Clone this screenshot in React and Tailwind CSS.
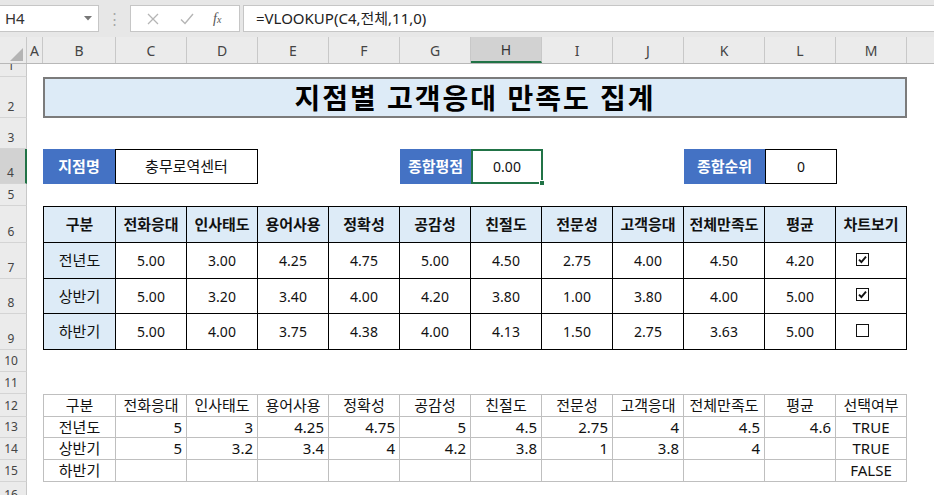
import React from 'react'

const colW = ['w-[73px]', 'w-[71px]', 'w-[71px]', 'w-[71px]', 'w-[71px]', 'w-[71px]', 'w-[71px]', 'w-[71px]', 'w-[71px]', 'w-[81px]', 'w-[71px]', 'w-[71px]']
const letters = ['B', 'C', 'D', 'E', 'F', 'G', 'H', 'I', 'J', 'K', 'L', 'M']

const heads = ['구분', '전화응대', '인사태도', '용어사용', '정확성', '공감성', '친절도', '전문성', '고객응대', '전체만족도', '평균']

const rows = [
  ['전년도', '5.00', '3.00', '4.25', '4.75', '5.00', '4.50', '2.75', '4.00', '4.50', '4.20', true],
  ['상반기', '5.00', '3.20', '3.40', '4.00', '4.20', '3.80', '1.00', '3.80', '4.00', '5.00', true],
  ['하반기', '5.00', '4.00', '3.75', '4.38', '4.00', '4.13', '1.50', '2.75', '3.63', '5.00', false],
]

const raw = [
  ['전년도', '5', '3', '4.25', '4.75', '5', '4.5', '2.75', '4', '4.5', '4.6', 'TRUE'],
  ['상반기', '5', '3.2', '3.4', '4', '4.2', '3.8', '1', '3.8', '4', '', 'TRUE'],
  ['하반기', '', '', '', '', '', '', '', '', '', '', 'FALSE'],
]

function RowHead({ n, h, active }) {
  return (
    <div className={`${h} w-[27px] shrink-0 overflow-hidden flex items-end justify-center pr-[4px] pb-[1px] text-[12px] text-[#444] border-b border-[#d4d4d4] ${active ? 'bg-[#d2d2d2] border-r-2 border-r-[#217346]' : 'bg-[#ebebeb] border-r border-r-[#c8c8c8]'}`}>
      {n}
    </div>
  )
}

function Check({ on }) {
  return (
    <svg width="13" height="13" viewBox="0 0 13 13">
      <rect x="0.5" y="0.5" width="12" height="12" fill="white" stroke="#111" />
      {on && <path d="M3 6.6 L5.4 9 L10 3.6" fill="none" stroke="#111" strokeWidth="1.9" />}
    </svg>
  )
}

export default function App() {
  return (
    <div className="w-[934px] h-[495px] overflow-hidden bg-white font-['Noto_Sans','Noto_Sans_CJK_KR',sans-serif] text-[#111]">
      {/* formula bar */}
      <div className="h-[37px] bg-[#e7e7e7] flex items-start pt-[5px] gap-0">
        <div className="w-[99px] h-[27px] bg-white border border-l-0 border-[#c6c6c6] flex items-center justify-between pl-[5px] pr-[6px] text-[15px] text-[#333]">
          <span>H4</span>
          <svg width="8" height="5" viewBox="0 0 8 5"><path d="M0 0 L8 0 L4 4.5 Z" fill="#777" /></svg>
        </div>
        <div className="w-[31px] h-[27px] flex items-center justify-center text-[#a8a8a8] text-[15px]">⋮</div>
        <div className="w-[110px] h-[27px] bg-white border border-[#c6c6c6] flex items-center pl-[16px] text-[#b5b5b5]">
          <svg width="12" height="12" viewBox="0 0 12 12"><path d="M1 1 L11 11 M11 1 L1 11" stroke="#b5b5b5" strokeWidth="1.3" /></svg>
          <svg className="ml-[21px]" width="14" height="12" viewBox="0 0 14 12"><path d="M1 6.5 L5 10.5 L13 1" fill="none" stroke="#b5b5b5" strokeWidth="1.4" /></svg>
          <span className="ml-[19px] font-['Liberation_Serif',serif] italic text-[14px] text-[#555]">f<span className="text-[10px]">x</span></span>
        </div>
        <div className="ml-[3px] flex-1 h-[27px] bg-white border border-r-0 border-[#c6c6c6] flex items-center pl-[12px] text-[15px] text-[#222]">
          =VLOOKUP(C4,전체,11,0)
        </div>
      </div>

      {/* column headers */}
      <div className="h-[27px] flex bg-[#ebebeb] border-b border-[#b8b8b8] text-[14px] text-[#444]">
        <div className="w-[27px] shrink-0 border-r border-[#c8c8c8] flex items-end justify-end pr-[3px] pb-[2px]">
          <svg width="13" height="13" viewBox="0 0 13 13"><path d="M13 0 L13 13 L0 13 Z" fill="#b4b4b4" /></svg>
        </div>
        <div className="w-[16px] shrink-0 border-r border-[#c8c8c8] flex items-center justify-center">A</div>
        {letters.map((l, i) => (
          <div key={l} className={`${colW[i]} shrink-0 flex items-center justify-center border-r ${l === 'H' ? 'bg-[#d2d2d2] border-b-2 border-b-[#217346] border-r-[#c8c8c8] text-[#333]' : 'border-[#c8c8c8]'}`}>{l}</div>
        ))}
        <div className="flex-1" />
      </div>

      {/* row 1 */}
      <div className="flex"><RowHead n="1" h="h-[13px]" /></div>

      {/* row 2: title */}
      <div className="flex">
        <RowHead n="2" h="h-[41px]" />
        <div className="w-[16px]" />
        <div className="w-[864px] h-[41px] bg-[#ddebf7] border-2 border-[#7b7b7b] flex items-center justify-center text-[28px] font-bold tracking-[2px] text-black">
          지점별 고객응대 만족도 집계
        </div>
      </div>

      {/* row 3 */}
      <div className="flex"><RowHead n="3" h="h-[31px]" /></div>

      {/* row 4 */}
      <div className="flex">
        <RowHead n="4" h="h-[35px]" active />
        <div className="w-[16px]" />
        <div className="w-[72px] h-[35px] bg-[#4472c4] text-white font-bold text-[15px] flex items-center justify-center">지점명</div>
        <div className="w-[143px] h-[35px] border border-black flex items-center justify-center text-[15px]">충무로역센터</div>
        <div className="w-[142px]" />
        <div className="w-[71px] h-[35px] bg-[#4472c4] text-white font-bold text-[15px] flex items-center justify-center">종합평점</div>
        <div className="relative w-[72px] h-[35px] border-2 border-[#217346] flex items-center justify-center text-[14px]">
          0.00
          <div className="absolute -right-[4px] -bottom-[4px] w-[6px] h-[6px] bg-[#217346] border border-white" />
        </div>
        <div className="w-[141px]" />
        <div className="w-[81px] h-[35px] bg-[#4472c4] text-white font-bold text-[15px] flex items-center justify-center">종합순위</div>
        <div className="w-[72px] h-[35px] border border-black flex items-center justify-center text-[14px]">0</div>
      </div>

      {/* row 5 */}
      <div className="flex"><RowHead n="5" h="h-[22px]" /></div>

      {/* row 6: table head */}
      <div className="flex">
        <RowHead n="6" h="h-[37px]" />
        <div className="w-[16px]" />
        {[...heads, '차트보기'].map((t, i) => (
          <div key={t} className={`${colW[i]} h-[37px] bg-[#ddebf7] border-t border-b border-r border-black ${i === 0 ? 'border-l' : ''} flex items-center justify-center text-[15px] font-bold whitespace-nowrap`}>{t}</div>
        ))}
      </div>

      {/* rows 7-9 */}
      {rows.map((r, ri) => {
        const h = ['h-[36px]', 'h-[35px]', 'h-[36px]'][ri]
        return (
          <div key={ri} className="flex">
            <RowHead n={String(7 + ri)} h={h} />
            <div className="w-[16px]" />
            {r.map((v, i) => (
              <div key={i} className={`${colW[i]} ${h} border-b border-r border-black ${i === 0 ? 'border-l bg-[#ddebf7] text-[15px]' : 'text-[14px]'} flex items-center ${i === 11 ? 'pl-[20px] pb-[3px]' : 'justify-center'}`}>
                {i === 11 ? <Check on={v} /> : v}
              </div>
            ))}
          </div>
        )
      })}

      {/* rows 10-11 */}
      <div className="flex"><RowHead n="10" h="h-[22px]" /></div>
      <div className="flex"><RowHead n="11" h="h-[22px]" /></div>

      {/* row 12: raw head */}
      <div className="flex">
        <RowHead n="12" h="h-[23px]" />
        <div className="w-[16px]" />
        {[...heads, '선택여부'].map((t, i) => (
          <div key={t} className={`${colW[i]} h-[23px] border-t border-b border-r border-[#bfbfbf] ${i === 0 ? 'border-l' : ''} flex items-center justify-center text-[15px] whitespace-nowrap`}>{t}</div>
        ))}
      </div>

      {/* rows 13-15 */}
      {raw.map((r, ri) => {
        const h = ['h-[21px]', 'h-[22px]', 'h-[22px]'][ri]
        return (
          <div key={ri} className="flex">
            <RowHead n={String(13 + ri)} h={h} />
            <div className="w-[16px]" />
            {r.map((v, i) => (
              <div key={i} className={`${colW[i]} ${h} border-b border-r border-[#bfbfbf] ${i === 0 ? 'border-l' : ''} flex items-center text-[15px] ${i === 0 || i === 11 ? 'justify-center' : 'justify-end pr-[4px]'}`}>{v}</div>
            ))}
          </div>
        )
      })}

      {/* row 16, mostly below the window edge */}
      <div className="flex">
        <div className="h-[13px] w-[27px] shrink-0 overflow-hidden bg-[#ebebeb] border-r border-[#c8c8c8] pt-[6px] pr-[4px] text-center text-[12px] leading-[14px] text-[#444]">16</div>
      </div>
    </div>
  )
}
